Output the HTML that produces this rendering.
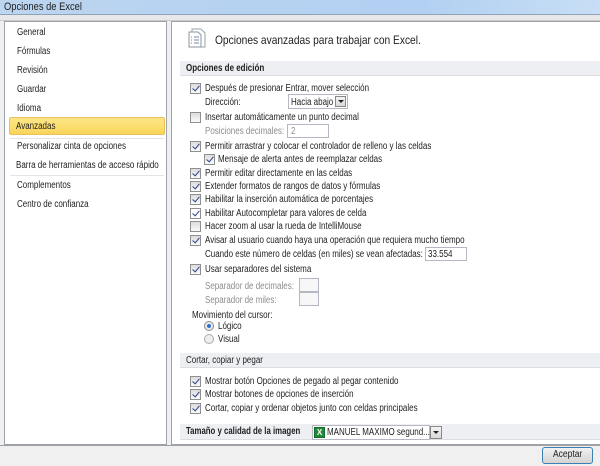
<!DOCTYPE html><html><head><meta charset="utf-8"><style>
*{margin:0;padding:0;box-sizing:border-box}
body{width:600px;height:466px;overflow:hidden;background:#f0f0f0;font-family:"Liberation Sans",sans-serif;font-size:10px;color:#1e1e1e;position:relative}
.a{position:absolute;white-space:nowrap}
.t{position:absolute;white-space:nowrap;transform:scaleX(.8);transform-origin:0 50%;line-height:12px;margin-top:1px}
.cb{position:absolute;width:11px;height:11px;border:1px solid #8e8f8f;background:linear-gradient(#dcdcdc,#fafafa)}
.cb.c::after{content:"";position:absolute;left:3px;top:0px;width:3px;height:6px;border:solid #2a3f8a;border-width:0 1.5px 1.5px 0;transform:rotate(40deg)}
.hd{position:absolute;left:180px;width:420px;height:15px;background:#eeeff3;border-bottom:1px solid #dcdde2}
.g{color:#8d8d8d}
.in{position:absolute;height:14px;border:1px solid #b5b8c0;background:#fff}
</style></head><body>
<div class="a" style="left:0;top:0;width:600px;height:15px;background:linear-gradient(90deg,#bcd5f0,#b2d0f2 70%,#c7def5);border-bottom:1px solid #8fa3b8"></div>
<div class="t" style="left:4px;top:0px;font-size:11px;transform:scaleX(.85)">Opciones de Excel</div>
<div class="a" style="left:4px;top:21px;width:163px;height:424px;background:#fff;border:1px solid #9da3aa"></div>
<div class="a" style="left:171px;top:21px;width:429px;height:424px;background:#fff;border:1px solid #9da3aa;border-right:none"></div>
<div class="a" style="left:0;top:15px;width:600px;height:6px;background:#e8e8e8;border-bottom:1px solid #c8c8c8"></div>
<div class="a" style="left:9px;top:117px;width:156px;height:18px;background:linear-gradient(#fde688,#fbd55a);border:1px solid #e8c15a;border-radius:2px"></div>
<div class="t" style="left:17px;top:26px">General</div>
<div class="t" style="left:17px;top:45px">Fórmulas</div>
<div class="t" style="left:17px;top:64px">Revisión</div>
<div class="t" style="left:17px;top:83px">Guardar</div>
<div class="t" style="left:17px;top:102px">Idioma</div>
<div class="t" style="left:16px;top:120px">Avanzadas</div>
<div class="a" style="left:10px;top:138px;width:154px;height:1px;background:#e4e4e4"></div>
<div class="t" style="left:17px;top:140px">Personalizar cinta de opciones</div>
<div class="t" style="left:16px;top:159px">Barra de herramientas de acceso rápido</div>
<div class="a" style="left:10px;top:175px;width:154px;height:1px;background:#e4e4e4"></div>
<div class="t" style="left:17px;top:179px">Complementos</div>
<div class="t" style="left:17px;top:198px">Centro de confianza</div>
<svg class="a" style="left:186px;top:27px" width="22" height="22" viewBox="0 0 22 22"><path d="M6 2h9l4 4v14H6z" fill="#fff" stroke="#9aa3ad"/><path d="M3 5h9l3 3v12H3z" fill="#fff" stroke="#8a949e"/><path d="M5 10h1M5 13h1M5 16h1M8 10h5M8 13h5M8 16h5" stroke="#6d88a8"/></svg>
<div class="t" style="left:215px;top:32px;font-size:12px;line-height:14px;transform:scaleX(.85)">Opciones avanzadas para trabajar con Excel.</div>
<div class="hd" style="top:61px"></div>
<div class="t" style="left:186px;top:62px;font-weight:bold;transform:scaleX(.8)">Opciones de edición</div>
<div class="cb c" style="left:190px;top:83px"></div><div class="t" style="left:205px;top:82px">Después de presionar Entrar, mover selección</div>
<div class="t" style="left:205px;top:96px">Dirección:</div>
<div class="in" style="left:288px;top:94px;width:60px;height:15px"></div><div class="t" style="left:291px;top:96px">Hacia abajo</div>
<div class="a" style="left:335px;top:96px;width:11px;height:11px;background:linear-gradient(#f4f4f4,#d8d8d8);border:1px solid #888"></div><div class="a" style="left:338px;top:100px;border:3px solid transparent;border-top:3px solid #222"></div>
<div class="cb" style="left:190px;top:112px"></div><div class="t" style="left:205px;top:111px">Insertar automáticamente un punto decimal</div>
<div class="t g" style="left:205px;top:125px">Posiciones decimales:</div>
<div class="in" style="left:287px;top:124px;width:42px"></div><div class="t g" style="left:291px;top:125px">2</div>
<div class="cb c" style="left:190px;top:141px"></div><div class="t" style="left:205px;top:140px">Permitir arrastrar y colocar el controlador de relleno y las celdas</div>
<div class="cb c" style="left:204px;top:154px"></div><div class="t" style="left:218px;top:153px">Mensaje de alerta antes de reemplazar celdas</div>
<div class="cb c" style="left:190px;top:168px"></div><div class="t" style="left:205px;top:167px">Permitir editar directamente en las celdas</div>
<div class="cb c" style="left:190px;top:181px"></div><div class="t" style="left:205px;top:180px">Extender formatos de rangos de datos y fórmulas</div>
<div class="cb c" style="left:190px;top:194px"></div><div class="t" style="left:205px;top:193px">Habilitar la inserción automática de porcentajes</div>
<div class="cb c" style="left:190px;top:208px;background:#fff"></div><div class="t" style="left:205px;top:207px">Habilitar Autocompletar para valores de celda</div>
<div class="cb" style="left:190px;top:221px"></div><div class="t" style="left:205px;top:220px">Hacer zoom al usar la rueda de IntelliMouse</div>
<div class="cb c" style="left:190px;top:235px"></div><div class="t" style="left:205px;top:234px">Avisar al usuario cuando haya una operación que requiera mucho tiempo</div>
<div class="t" style="left:205px;top:248px">Cuando este número de celdas (en miles) se vean afectadas:</div>
<div class="in" style="left:425px;top:247px;width:42px"></div><div class="t" style="left:428px;top:248px">33.554</div>
<div class="cb c" style="left:190px;top:264px"></div><div class="t" style="left:205px;top:263px">Usar separadores del sistema</div>
<div class="t g" style="left:205px;top:280px">Separador de decimales:</div><div class="in" style="left:299px;top:278px;width:20px;height:14px;background:#f7f7f7"></div>
<div class="t g" style="left:205px;top:294px">Separador de miles:</div><div class="in" style="left:299px;top:292px;width:20px;height:14px;background:#f7f7f7"></div>
<div class="t" style="left:192px;top:309px">Movimiento del cursor:</div>
<div class="a" style="left:204px;top:321px;width:10px;height:10px;border-radius:50%;border:1px solid #8e8f8f;background:radial-gradient(#2a6fd0 30%,#e8e8e8 40%)"></div><div class="t" style="left:218px;top:320px">Lógico</div>
<div class="a" style="left:204px;top:334px;width:10px;height:10px;border-radius:50%;border:1px solid #aaa;background:#eee"></div><div class="t" style="left:218px;top:333px">Visual</div>
<div class="hd" style="top:353px"></div>
<div class="t" style="left:186px;top:354px;transform:scaleX(.8)">Cortar, copiar y pegar</div>
<div class="cb c" style="left:190px;top:376px"></div><div class="t" style="left:205px;top:375px">Mostrar botón Opciones de pegado al pegar contenido</div>
<div class="cb c" style="left:190px;top:389px"></div><div class="t" style="left:205px;top:388px">Mostrar botones de opciones de inserción</div>
<div class="cb c" style="left:190px;top:403px"></div><div class="t" style="left:205px;top:402px">Cortar, copiar y ordenar objetos junto con celdas principales</div>
<div class="hd" style="top:424px;height:16px"></div>
<div class="t" style="left:186px;top:425px;font-weight:bold;transform:scaleX(.78)">Tamaño y calidad de la imagen</div>
<div class="in" style="left:312px;top:425px;width:118px;height:15px"></div>
<div class="a" style="left:314px;top:427px;width:11px;height:11px;background:#1f8a3a;border:1px solid #156b2a;color:#fff;font-size:8px;line-height:9px;text-align:center;font-weight:bold">X</div>
<div class="t" style="left:327px;top:426px">MANUEL MAXIMO segund...</div>
<div class="a" style="left:430px;top:426px;width:12px;height:13px;background:linear-gradient(#f4f4f4,#d8d8d8);border:1px solid #888"></div><div class="a" style="left:433px;top:431px;border:3px solid transparent;border-top:3px solid #222"></div>
<div class="a" style="left:0;top:445px;width:600px;height:1px;background:#a0a0a0"></div>
<div class="a" style="left:542px;top:447px;width:51px;height:17px;border:1px solid #3c7fb1;border-radius:3px;background:linear-gradient(#f2f2f2,#e2e2e2 50%,#d4d4d4)"></div>
<div class="t" style="left:553px;top:448px;transform:scaleX(.85)">Aceptar</div>
</body></html>
